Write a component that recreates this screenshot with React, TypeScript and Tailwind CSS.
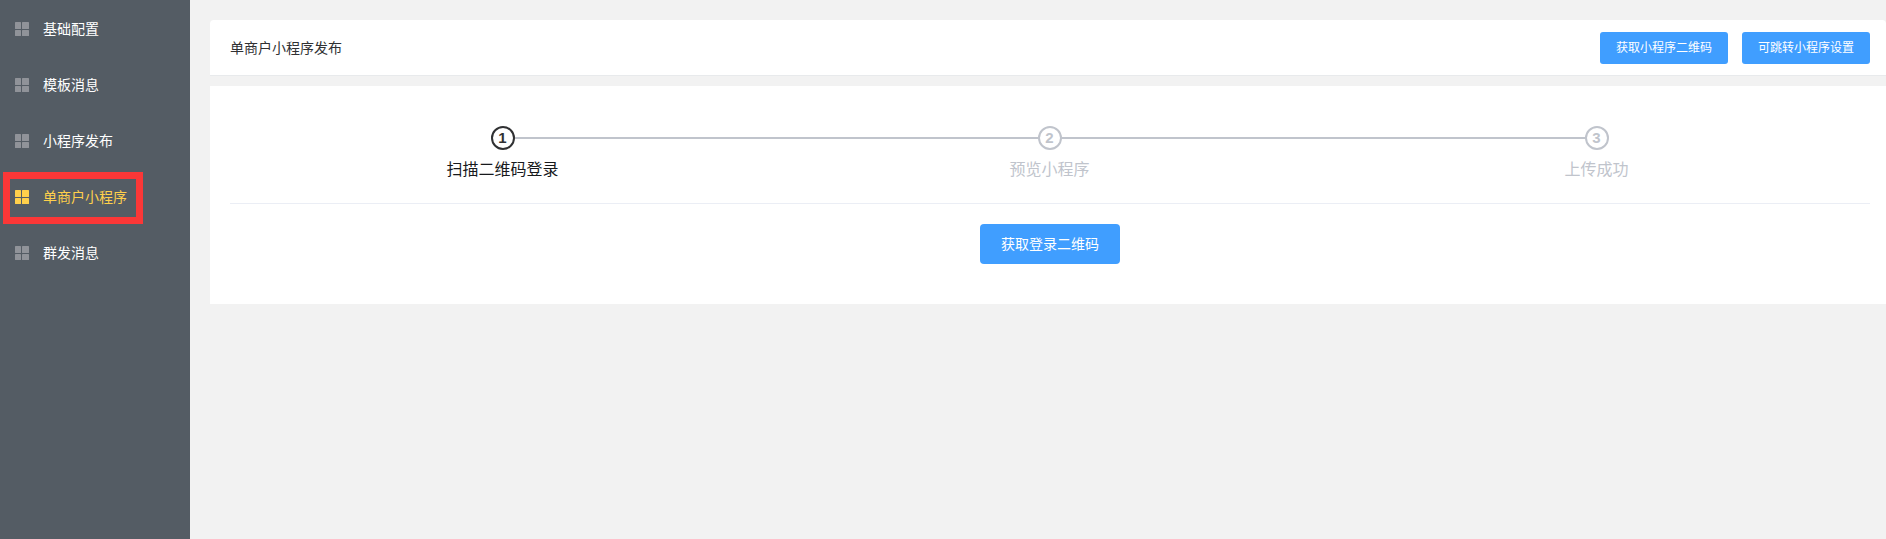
const font = '[font-family:"Liberation_Sans","Noto_Sans_CJK_SC",sans-serif]'

const menus = ['基础配置', '模板消息', '小程序发布', '单商户小程序', '群发消息']
const steps = ['扫描二维码登录', '预览小程序', '上传成功']

function GridIcon({ active }: { active: boolean }) {
  const fill = active ? '#ffd04b' : '#909399'
  return (
    <svg width="14" height="14" viewBox="0 0 14 14" className="shrink-0">
      <rect x="0" y="0" width="6" height="7" rx="0.5" fill={fill} />
      <rect x="7" y="0" width="7" height="7" rx="0.5" fill={fill} />
      <rect x="0" y="8" width="6" height="6" rx="0.5" fill={fill} />
      <rect x="7" y="8" width="7" height="6" rx="0.5" fill={fill} />
    </svg>
  )
}

function Sidebar() {
  return (
    <aside className="w-[190px] shrink-0 bg-[#545c64] pt-px">
      {menus.map((m, i) => (
        <div key={m} className={`relative flex h-[56px] items-center gap-[14px] pl-[15px] text-sm ${i === 3 ? 'text-[#ffd04b]' : 'text-white'}`}>
          <GridIcon active={i === 3} />
          <span>{m}</span>
          {i === 3 && <div className="absolute left-[3px] top-[3px] h-[52px] w-[140px] border-[7px] border-[#fb3737]" />}
        </div>
      ))}
    </aside>
  )
}

function Step({ index, label }: { index: number; label: string }) {
  const done = index === 0
  return (
    <div className={`relative flex-1 text-center ${done ? 'text-[#303133]' : 'text-[#c0c4cc]'}`}>
      {index < 2 && <div className="absolute left-1/2 top-[11px] h-[2px] w-full bg-[#c0c4cc]" />}
      <div className="relative mx-auto flex h-[24px] w-[24px] items-center justify-center rounded-full border-2 border-current bg-white text-[15px] font-bold">
        {index + 1}
      </div>
      <div className={`mt-[9px] text-base leading-[22px] ${done ? 'text-[#17191c]' : ''}`}>{label}</div>
    </div>
  )
}

export default function App() {
  return (
    <div className={`flex min-h-screen bg-[#f2f2f2] ${font}`}>
      <Sidebar />
      <main className="flex-1 pl-[20px] pt-[20px]">
        <div className="flex h-[56px] items-center justify-between rounded-t-[4px] border-b border-[#e8eaec] bg-white px-[20px] pr-[16px]">
          <span className="text-sm text-[#303133]">单商户小程序发布</span>
          <div className="flex gap-[14px]">
            <button className="h-[32px] w-[128px] rounded-[3px] bg-[#409eff] text-xs text-white">获取小程序二维码</button>
            <button className="h-[32px] w-[128px] rounded-[3px] bg-[#409eff] text-xs text-white">可跳转小程序设置</button>
          </div>
        </div>
        <div className="mt-[10px] h-[218px] bg-white pl-[20px] pr-[16px] pt-[40px]">
          <div className="border-b border-[#ebeef5] pb-[22px]">
            <div className="-ml-px flex">
              {steps.map((s, i) => <Step key={s} index={i} label={s} />)}
            </div>
          </div>
          <div className="mt-[20px] flex justify-center">
            <button className="h-[40px] w-[140px] rounded-[4px] bg-[#409eff] text-sm text-white">获取登录二维码</button>
          </div>
        </div>
      </main>
    </div>
  )
}
